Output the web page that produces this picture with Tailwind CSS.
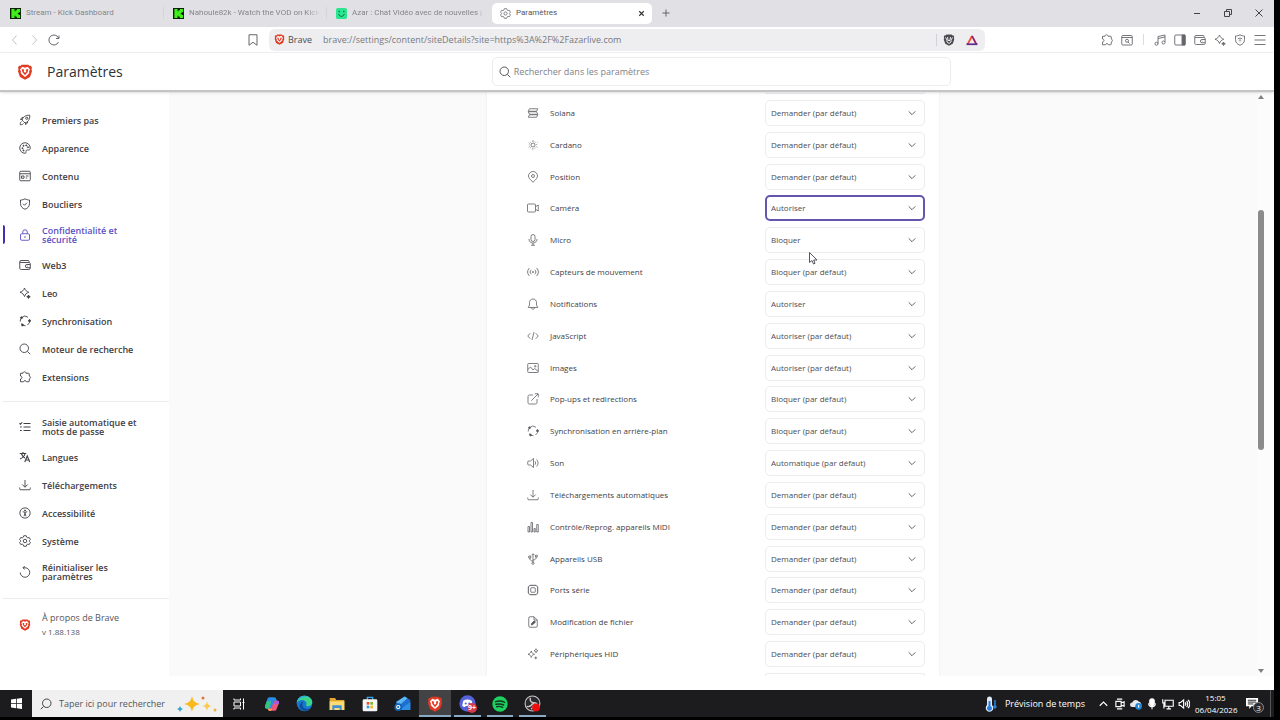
<!DOCTYPE html>
<html lang="fr">
  <head>
    <meta charset="UTF-8" />
    <meta name="viewport" content="width=device-width, initial-scale=1.0" />
    <title>Paramètres</title>
    <script src="https://cdn.jsdelivr.net/npm/@tailwindcss/browser@4"></script>
  </head>
  <body class="bg-black font-['Open_Sans','Noto_Sans',sans-serif] text-[#3b3e4f]">
    <!-- icon sprite -->
    <svg class="hidden">
      <symbol id="i-brave" viewBox="0 0 24 24"><path fill="#e03a24" d="M7 1h10l2 2 2-.3L22.500 6l-.8 2 .8 3-3 8.500L12 23.500 4.500 19.500l-3-8.500.8-3L1.500 6 3 2.700 5 3z"/><path fill="#fff" d="M12 5.500l4-1.500 3.500 4-1.500 3.500.5 2-2.500 2.500-4 3.500-4-3.500L5.500 13.500l.5-2L4.500 8 8 4z"/><path fill="#e03a24" d="M7 7.500l3.500.8-.3 3.200 1.800 1.500 1.800-1.500-.3-3.200 3.500-.8-1 4.500L12 17l-4-5z"/></symbol>
      <symbol id="i-lion" viewBox="0 0 24 24"><path fill="#4a4b52" d="M7 1h10l2 2 2-.3L22.500 6l-.8 2 .8 3-3 8.500L12 23.500 4.500 19.500l-3-8.500.8-3L1.500 6 3 2.700 5 3z"/><path fill="none" stroke="#fff" stroke-width="1.800" d="M5 7l3 5v4l4 3 4-3v-4l3-5M9 6l1 6 2 2 2-2 1-6"/></symbol>
      <symbol id="i-rocket" viewBox="0 0 24 24"><path d="M9 15l-3-3c1.500-5 6-10 15.500-9.500C22 12 17 16.500 12 18zM6.500 11H3l3-4h3M13 17.500V21l4-3v-3M5 15c-2 1-2.500 3-2.500 6.500 3.500 0 5.500-.5 6.500-2.500"/><circle cx="15.500" cy="8.500" r="2.200"/></symbol>
      <symbol id="i-palette" viewBox="0 0 24 24"><path d="M12 1.500a10.500 10.500 0 1 0 0 21c2 0 2.500-1.500 2-3-.6-2 .5-3.500 2.500-3.500H19c2.500 0 3.500-1.500 3.500-4A10.500 10.500 0 0 0 12 1.500z"/><g fill="currentColor"><circle cx="7" cy="12.500" r="1.100"/><circle cx="9" cy="7.500" r="1.100"/><circle cx="14.500" cy="6.800" r="1.100"/><circle cx="18" cy="10.500" r="1.100"/><circle cx="9" cy="17" r="1.100"/></g></symbol>
      <symbol id="i-content" viewBox="0 0 24 24"><rect x="1.500" y="2.500" width="21" height="19" rx="2"/><path d="M1.500 7.500h21M13.500 12h5.500M13.500 16h3M5 12h5v4.500H5z"/></symbol>
      <symbol id="i-shield" viewBox="0 0 24 24"><path d="M12 1.500c3 2 6 2.500 9 2.500v7c0 6-3.500 9.500-9 11.500C6.500 20.500 3 17 3 11V4c3 0 6-.5 9-2.500zM8 11.500l3 3 5-5"/></symbol>
      <symbol id="i-lock" viewBox="0 0 24 24"><rect x="3" y="9.500" width="18" height="13" rx="2.500"/><path d="M7.500 9.500V6a4.500 4.500 0 0 1 9 0v3.500M12 14v4"/></symbol>
      <symbol id="i-wallet" viewBox="0 0 24 24"><path d="M20 7V4.500C20 3.500 19 3 18 3H4C2.500 3 1.500 4 1.500 5.500V18c0 2 1 3 3 3h15c2 0 3-1 3-3v-8c0-2-1-3-3-3H4C2.500 7 1.500 6.500 1.500 5.500M22.500 11H16a3 3 0 0 0 0 6.500h6.500M16 14.200h1"/></symbol>
      <symbol id="i-leo" viewBox="0 0 24 24"><path d="M11 2c1.500 4.500 4 7 8.500 8.500-4.500 1.500-7 4-8.500 8.500-1.500-4.500-4-7-9-8.500C7 9 9.500 6.500 11 2z"/><path fill="currentColor" d="M19 16l1 2.500 2.500 1-2.500 1-1 2.500-1-2.500-2.500-1 2.500-1z"/></symbol>
      <symbol id="i-sync" viewBox="0 0 24 24"><path d="M5.500 5A9.500 9.500 0 0 1 18 4.500M21 9a9.500 9.500 0 0 1-4 11M13 21.500A9.500 9.500 0 0 1 4 17M2.500 13A9.500 9.500 0 0 1 4 7"/><g fill="currentColor"><circle cx="5" cy="5.500" r="1.800"/><circle cx="21" cy="11.500" r="2"/><circle cx="7" cy="20" r="1.800"/></g></symbol>
      <symbol id="i-search" viewBox="0 0 24 24"><circle cx="10.500" cy="10.500" r="8.500"/><path d="M16.700 16.700L22.500 22.500"/></symbol>
      <symbol id="i-puzzle" viewBox="0 0 24 24"><path d="M3 4.500h5c0-4 6-4 6 0h5c1 0 1.500.5 1.500 1.500V10c3 .5 3 5.500 0 6v4c0 1-.5 1.500-1.500 1.500h-4c-.5-3-5.500-3-6 0H3v-5.500c4 0 4-6 0-6z"/></symbol>
      <symbol id="i-list" viewBox="0 0 24 24"><path stroke-width="2.200" d="M9 5h14M9 12h14M9 19h14M1 4.500l2 2 3.500-4M2 12h3.500M2 19h3.500"/></symbol>
      <symbol id="i-lang" viewBox="0 0 24 24"><path d="M1.500 5h13M8 2v3M12 5c-1 5-5 9-10 11M4.500 5c1.500 4 4 7 7.500 9M11.500 22l5-12 5 12M13.500 18h6.500" stroke-width="2.200"/></symbol>
      <symbol id="i-download" viewBox="0 0 24 24"><path d="M12 2v14M6.500 11l5.500 5.500 5.500-5.500M1.500 17v2.500c0 1.500.5 2 2 2h17c1.500 0 2-.5 2-2V17"/></symbol>
      <symbol id="i-access" viewBox="0 0 24 24"><circle cx="12" cy="12" r="10.300"/><path d="M7.500 9.500l4.500 1 4.500-1M12 10.500v4M12 13l-2 5.500M12 13l2 5.500"/><circle cx="12" cy="6.800" r="1" fill="currentColor"/></symbol>
      <symbol id="i-gear" viewBox="0 0 24 24"><path d="M9.500 1.500h5l1 3 2 1.200 3-.7 2.300 4-2 2.300v1.400l2 2.300-2.300 4-3-.7-2 1.200-1 3h-5l-1-3-2-1.200-3 .7-2.300-4 2-2.300v-1.400l-2-2.300 2.300-4 3 .7 2-1.200z"/><circle cx="12" cy="12" r="3.500"/></symbol>
      <symbol id="i-reset" viewBox="0 0 24 24"><path d="M2.500 13a9.500 9.500 0 1 0 9.500-9.500H8M11.500 0L8 3.500 11.500 7"/></symbol>
      <symbol id="i-solana" viewBox="0 0 24 24"><path d="M5 3.500h16.500l-2.500 5H2.500zM2.500 9.500H19l2.500 5H5zM5 15.500h16.500l-2.500 5H2.500z"/></symbol>
      <symbol id="i-cardano" viewBox="0 0 24 24"><circle cx="12" cy="12" r="4"/><path stroke-dasharray="1.600 2.700" d="M12 4.500a7.500 7.500 0 1 0 .01 0"/><path d="M12 2v1M12 21v1M3.500 7l.8.500M20 16.500l.8.500M3.500 17l.8-.5M20 7.500l.8-.5"/></symbol>
      <symbol id="i-pin" viewBox="0 0 24 24"><path d="M12 22.500C6 17 3 13.500 3 10a9 9 0 0 1 18 0c0 3.500-3 7-9 12.500z"/><circle cx="12" cy="10" r="3"/></symbol>
      <symbol id="i-camera" viewBox="0 0 24 24"><rect x="1" y="4" width="16" height="16" rx="2"/><path d="M17 9.500L22.500 6v12L17 14.500"/></symbol>
      <symbol id="i-mic" viewBox="0 0 24 24"><rect x="8" y="1" width="8" height="14" rx="4"/><path d="M4 10c0 5 3 8 8 8s8-3 8-8M12 18v4.500M8 22.500h8"/></symbol>
      <symbol id="i-motion" viewBox="0 0 24 24"><path d="M5 4c-5 5-5 11 0 16M19 4c5 5 5 11 0 16M8.500 7.500c-3 3-3 6 0 9M15.500 7.500c3 3 3 6 0 9"/><circle cx="12" cy="12" r="1" fill="currentColor"/></symbol>
      <symbol id="i-bell" viewBox="0 0 24 24"><path d="M12 2c-4.500 0-7 3-7 7.500V14l-2.500 5h19L19 14V9.500C19 5 16.500 2 12 2zM8.500 19c.5 4.500 6.500 4.500 7 0"/></symbol>
      <symbol id="i-code" viewBox="0 0 24 24"><path d="M6.500 6.500L1.500 12l5 5.500M17.500 6.500l5 5.500-5 5.500M14 4l-4 16"/></symbol>
      <symbol id="i-image" viewBox="0 0 24 24"><rect x="1.500" y="3" width="21" height="18" rx="1.500"/><path d="M1.500 15l5.500-5 5 6 3.500-3 7 6"/><circle cx="16.500" cy="8.500" r="1.500"/></symbol>
      <symbol id="i-popup" viewBox="0 0 24 24"><path d="M12 4H5C3 4 2 5 2 7v12c0 2 1 3 3 3h12c2 0 3-1 3-3v-7M15.500 1.500h7v7M22 2L8.500 15.500"/></symbol>
      <symbol id="i-sound" viewBox="0 0 24 24"><path d="M13 3v18l-6-5H3c-1 0-1.500-.5-1.500-1.500v-5C1.500 8.500 2 8 3 8h4zM16 8.500c1.500 2 1.500 5 0 7M19 5c4 4 4 10 0 14"/></symbol>
      <symbol id="i-midi" viewBox="0 0 24 24"><path d="M2 11h3v11H2zM8 3h3v19H8zM14 15h2.500v7H14zM19.500 7h3v15h-3z"/></symbol>
      <symbol id="i-usb" viewBox="0 0 24 24"><path d="M12 19V2M9 4.500L12 1.500l3 3M12 16c-4 0-6.500-2-6.500-6M12 14c4 0 6.500-2 6.500-6M3.500 6h4v4h-4zM17 4.500h3.500V8H17z"/><circle cx="12" cy="20.500" r="2.200"/></symbol>
      <symbol id="i-chip" viewBox="0 0 24 24"><rect x="3" y="3" width="18" height="18" rx="3"/><rect x="7.500" y="7.500" width="9" height="9" rx="1"/><path d="M8 3V1M12 3V1M16 3V1M8 23v-2M12 23v-2M16 23v-2M1 8h2M1 12h2M1 16h2M21 8h2M21 12h2M21 16h2"/></symbol>
      <symbol id="i-file" viewBox="0 0 24 24"><path d="M14 1.500H6C4.500 1.500 3.500 2.500 3.500 4v16c0 1.500 1 2.500 2.500 2.500h12c1.500 0 2.500-1 2.500-2.500V8zM14 1.500V8h6.500"/><path fill="currentColor" d="M8.500 18l1-3.500 5-5 2.500 2.500-5 5z"/></symbol>
      <symbol id="i-hid" viewBox="0 0 24 24"><path d="M8.500 6c1 3.800 2.700 5.500 6.500 6.500-3.800 1-5.500 2.700-6.500 6.500-1-3.800-2.700-5.500-6.500-6.500C5.800 11.500 7.500 9.800 8.500 6zM18 1.500c.4 2.400 1.500 3.500 4 4-2.500.5-3.600 1.600-4 4-.4-2.400-1.500-3.500-4-4 2.500-.5 3.600-1.600 4-4zM17.500 17v5.500M14.800 19.700h5.500"/></symbol>
      <symbol id="i-chevron" viewBox="0 0 24 24"><path d="M4 8l8 8 8-8"/></symbol>
      <symbol id="i-kick" viewBox="0 0 24 24"><path fill="#0b1f06" d="M0 0h24v24H0z"/><path fill="#3ff01b" d="M3 2h7v5h2V5h3V2h7v7h-3v2h-2v2h2v2h3v7h-7v-3h-3v-2h-2v5H3z"/></symbol>
    </svg>

    <div class="flex h-screen flex-col pr-[6px] pb-[3px]">
      <div class="flex min-h-0 flex-1 flex-col bg-white">
        <!-- tab strip -->
        <div class="flex h-[27px] shrink-0 items-center bg-[#e1e1e5] pb-px font-['Roboto',sans-serif] text-[8px] text-[#85868c]">
          <div class="flex w-[163px] items-center gap-[5px] pl-[10px]">
            <svg class="size-[11px]"><use href="#i-kick" /></svg><span>Stream - Kick Dashboard</span>
          </div>
          <div class="flex w-[163px] items-center gap-[5px] border-l border-[#d4d4d9] pl-[9px]">
            <svg class="size-[11px] shrink-0"><use href="#i-kick" /></svg>
            <span class="mr-[6px] overflow-hidden whitespace-nowrap mask-r-from-90%">Nahoule82k - Watch the VOD on Kick</span>
          </div>
          <div class="flex w-[163px] items-center gap-[5px] border-l border-[#d4d4d9] pl-[9px]">
            <svg class="size-[11px] shrink-0" viewBox="0 0 24 24"><rect width="24" height="24" rx="4" fill="#2be58f" /><path d="M6 13c1 7 11 7 12 0" fill="none" stroke="#0b5c48" stroke-width="2" /><path d="M7 6v3M17 6v3" stroke="#0b5c48" stroke-width="2.500" /></svg>
            <span class="mr-[6px] overflow-hidden whitespace-nowrap mask-r-from-95%">Azar : Chat Vidéo avec de nouvelles personnes</span>
          </div>
          <div class="ml-[3px] flex h-[21px] w-[160px] items-center rounded-[5px] bg-white pr-[6px] pl-[8px] text-[#55565c]">
            <svg class="mr-[5px] size-[11px] fill-none stroke-[#55565c] stroke-[1.5]"><use href="#i-gear" /></svg>
            <span>Paramètres</span>
            <button class="ml-auto" aria-label="Fermer l'onglet"><svg class="size-[9px] fill-none stroke-[#333] stroke-[1.5]" viewBox="0 0 12 12"><path d="M3 3l6 6M9 3l-6 6" /></svg></button>
          </div>
          <button class="ml-[10px]" aria-label="Nouvel onglet"><svg class="size-[8px] fill-none stroke-[#666]" viewBox="0 0 8 8"><path d="M4 .5v7M.5 4h7" /></svg></button>
          <div class="ml-auto flex items-center gap-[23px] pr-[11px]">
            <button aria-label="Réduire"><svg class="size-[8px] fill-none stroke-[#444]" viewBox="0 0 8 8"><path d="M1 4.500h6" /></svg></button>
            <button aria-label="Restaurer"><svg class="size-[8px] fill-none stroke-[#444]" viewBox="0 0 8 8"><path d="M.5 2.500h5v5h-5zM2.500 2.500v-2h5v5h-2" /></svg></button>
            <button aria-label="Fermer"><svg class="size-[8px] fill-none stroke-[#444]" viewBox="0 0 8 8"><path d="M.5.5l7 7M7.500.5l-7 7" /></svg></button>
          </div>
        </div>

        <!-- toolbar -->
        <div class="flex h-[26px] shrink-0 items-center border-b border-[#f2f2f4] pl-[9px] text-[#77787f]">
          <button aria-label="Précédent"><svg class="size-[12px] fill-none stroke-[#c2c2c8] stroke-2" viewBox="0 0 24 24"><path d="M15 3l-8 9 8 9" /></svg></button>
          <button class="ml-[7px]" aria-label="Suivant"><svg class="size-[12px] fill-none stroke-[#c2c2c8] stroke-2" viewBox="0 0 24 24"><path d="M9 3l8 9-8 9" /></svg></button>
          <button class="ml-[8px]" aria-label="Actualiser"><svg class="size-[12px] fill-none stroke-[#66676d] stroke-2" viewBox="0 0 24 24"><path d="M21 16a10 10 0 1 1 0-8M22 3v6h-6" /></svg></button>
          <button class="ml-[187px]" aria-label="Favori"><svg class="size-[12px] fill-none stroke-[#66676d] stroke-2" viewBox="0 0 24 24"><path d="M4 1.500h16v21l-8-6-8 6z" /></svg></button>
          <div class="ml-[10px] flex h-[22px] w-[716px] items-center rounded-[6px] bg-[#eeeef1] pr-[7px] pl-[5px]">
            <svg class="mr-[3px] size-[11px]"><use href="#i-brave" /></svg>
            <label for="url" class="w-[35px] text-[9px] text-[#4b4c53]">Brave</label>
            <input id="url" class="min-w-0 flex-1 bg-transparent text-[9px] outline-none" value="brave://settings/content/siteDetails?site=https%3A%2F%2Fazarlive.com" />
            <span class="h-[12px] w-px bg-[#d2d2d8]"></span>
            <button class="ml-[6px]" aria-label="Boucliers"><svg class="size-[12px]"><use href="#i-lion" /></svg></button>
            <button class="ml-[11px]" aria-label="Rewards"><svg class="size-[12px] fill-none stroke-[3.5]" viewBox="0 0 24 24"><path stroke="#f4502e" d="M3 21L12 4" /><path stroke="#9e1f63" d="M12 4l9 17" /><path stroke="#5f2a91" d="M1 20.500h22" /></svg></button>
          </div>
          <div class="ml-auto flex items-center gap-[8px] fill-none stroke-[#66676d] stroke-[1.8] pr-[8px]">
            <button aria-label="Extensions"><svg class="size-[12px]"><use href="#i-puzzle" /></svg></button>
            <button aria-label="Rechercher un onglet"><svg class="size-[12px]" viewBox="0 0 24 24"><rect x="1.500" y="3" width="21" height="19" rx="2" /><path d="M1.500 7h21M14 16l3 3" /><circle cx="12" cy="13.500" r="3" /></svg></button>
            <span class="mx-[2px] h-[11px] w-px bg-[#dcdce0]"></span>
            <button aria-label="Playlist"><svg class="size-[12px]" viewBox="0 0 24 24"><path d="M8 19V5l14-3v14M8 9l14-3" /><circle cx="5" cy="19.500" r="3" /><circle cx="19" cy="17" r="3" /></svg></button>
            <button aria-label="Barre latérale"><svg class="size-[12px]" viewBox="0 0 24 24"><rect x="1.500" y="2" width="21" height="20" rx="2" /><path fill="#66676d" d="M16 2h6v20h-6z" /></svg></button>
            <button aria-label="Portefeuille"><svg class="size-[12px]"><use href="#i-wallet" /></svg></button>
            <button aria-label="Leo"><svg class="size-[12px] text-[#66676d]"><use href="#i-leo" /></svg></button>
            <button aria-label="VPN"><svg class="size-[12px]" viewBox="0 0 24 24"><path d="M12 1.500c3 2 6 2.500 9 2.500v7c0 6-3.500 9.500-9 11.500C6.500 20.500 3 17 3 11V4c3 0 6-.5 9-2.500zM7.500 10c3-2.500 6-2.500 9 0M9.500 13c2-1.300 3-1.300 5 0M12 15.500v1" /></svg></button>
            <button aria-label="Menu"><svg class="size-[12px]" viewBox="0 0 24 24"><path d="M1 3h22M1 12h22M1 21h22" /></svg></button>
          </div>
        </div>

        <!-- settings header -->
        <header class="relative flex h-[39px] shrink-0 items-center border-b-2 border-[#c4c4c6] shadow-sm">
          <svg class="ml-[17px] size-[16px]"><use href="#i-brave" /></svg>
          <h1 class="ml-[14px] text-[14px] font-medium text-[#2f3036]">Paramètres</h1>
          <div class="ml-[369px] flex h-[29px] w-[459px] items-center gap-[3px] rounded-[5px] border border-[#ececef] pl-[6px]">
            <svg class="size-[12px] fill-none stroke-[#55565c] stroke-2"><use href="#i-search" /></svg>
            <input type="search" aria-label="Rechercher dans les paramètres" placeholder="Rechercher dans les paramètres" class="flex-1 bg-transparent text-[9px] outline-none placeholder:text-[#808188]" />
          </div>
        </header>

        <div class="flex min-h-0 flex-1 pb-[14px]">
          <nav id="menu" class="ml-[3px] w-[166px] shrink-0 pt-[14px] text-[9px] leading-[9px] font-semibold"></nav>

          <main class="flex min-w-0 flex-1 justify-center overflow-hidden bg-[#fafafb]">
            <div class="flex w-[452px] flex-col bg-white pr-[14px] pl-[40px] shadow-[0_0_2px_#e8e8ea]">
              <div class="ml-auto h-[2px] w-[160px] shrink-0 rounded-b-[5px] border-x border-b border-[#ececef]"></div>
              <div id="permissions" class="mt-[3px] grid min-h-0 flex-1 auto-rows-fr text-[8px]"></div>
              <div class="mt-[3px] ml-auto h-[3px] w-[160px] shrink-0 rounded-t-[5px] border-x border-t border-[#ececef]"></div>
            </div>
          </main>

          <!-- scrollbar -->
          <div class="flex w-[17px] shrink-0 flex-col items-center justify-between bg-[#fcfcfc] py-[3px] pr-[9px]">
            <svg class="h-[4px] w-[6px] fill-[#808080]" viewBox="0 0 6 4"><path d="M0 4l3-4 3 4z" /></svg>
            <div class="mt-[111px] mb-auto h-[240px] w-[6px] rounded-full bg-[#8b8b8b]"></div>
            <svg class="h-[4px] w-[6px] fill-[#808080]" viewBox="0 0 6 4"><path d="M0 0l3 4 3-4z" /></svg>
          </div>
        </div>
      </div>

      <!-- taskbar -->
      <footer class="flex h-[27px] shrink-0 items-center bg-[#1c1c1f] text-white">
        <button class="flex w-[32px] justify-center" aria-label="Démarrer"><svg class="size-[11px] fill-white" viewBox="0 0 22 22"><path d="M0 3l10-1.500V10.500H0zM11.500 1.300L22 0v10.500H11.500zM0 12h10v8.500L0 19zM11.500 12H22v10l-10.500-1.500z" /></svg></button>
        <div class="flex h-full w-[191px] items-center gap-[7px] bg-[#f0f0f0] pr-[6px] pl-[8px]">
          <svg class="size-[12px] -scale-x-100 fill-none stroke-[#444] stroke-2"><use href="#i-search" /></svg>
          <input aria-label="Taper ici pour rechercher" placeholder="Taper ici pour rechercher" class="w-[110px] bg-transparent text-[9px] outline-none placeholder:text-[#55565a]" />
          <svg class="ml-auto h-[18px] w-[40px]" viewBox="0 0 40 18"><path fill="#f9b91c" d="M15 1c1 5 3 7 8 8-5 1-7 3-8 8-1-5-3-7-8-8 5-1 7-3 8-8z" /><path fill="#f8ca52" d="M30 6c.7 3.500 1.500 4.300 5 5-3.500.7-4.300 1.500-5 5-.7-3.500-1.500-4.300-5-5 3.500-.7 4.300-1.500 5-5z" /><path fill="#2ba3d4" d="M3 11l1 2 2 1-2 1-1 2-1-2-2-1 2-1z" /><circle cx="26" cy="3" r="1.500" fill="#d9773c" /><circle cx="38" cy="15" r="1.500" fill="#e8b647" /></svg>
        </div>
        <div class="flex h-full w-[326px]">
          <button class="flex flex-1 items-center justify-center" aria-label="Vue des tâches"><svg class="size-[12px] fill-none stroke-white stroke-2" viewBox="0 0 24 24"><path d="M2 1v3h13V1M2 8h13v8H2zM2 23v-3h13v3M21 1v22M19 9h4" /></svg></button>
          <button class="flex flex-1 items-center justify-center" aria-label="Copilot"><svg class="size-[16px]" viewBox="0 0 24 24"><path fill="#2a8de8" d="M8 2h7c2 0 3 1 3.500 3l1 3H15l-2 7c-1 3-2 4-4 4H4c-3 0-3-2-2-5l3-9c.5-2 1.500-3 3-3z" /><path fill="#35c27e" d="M4 8l-2 6c-1 3-1 5 2 5h4l3-11z" /><path fill="#e9577a" d="M16 22H9c-2 0-3-1-3.500-3l5.500-1 3-8c.5-2 1.500-3 3-3h3c3 0 3 2 2 5l-3 7c-.5 2-1.500 3-3 3z" /><path fill="#f7a44c" d="M6 19h6l-1 3H9c-2 0-3-1-3-3z" /><path fill="#a85be0" d="M17 7h3c3 0 3 2 2 5h-7z" /></svg></button>
          <button class="flex flex-1 items-center justify-center" aria-label="Edge"><svg class="size-[17px]" viewBox="0 0 24 24"><circle cx="12" cy="12" r="11" fill="#1679cf" /><path fill="#3ed58b" d="M1 11C2 4 7 1 12 1c7 0 11 5 11 9 0 4-3 6-6 6-2 0-3-1-2.500-2.500C16 10 12 7 8 7c-3 0-6 2-7 4z" /><path fill="#2cb5dc" d="M1 11C2 5 6 1 12 1c2 0 4 .5 6 2-5-1-14 0-17 8z" /><path fill="#0d4f9e" d="M9 13c0 5 5 8 11 6-5 6-14 4-15-3 0-4 3-7 6-7-1 1-2 2-2 4z" /></svg></button>
          <button class="flex flex-1 items-center justify-center" aria-label="Explorateur"><svg class="size-[16px]" viewBox="0 0 24 24"><path fill="#e3a72b" d="M1 3h8l2 3h12v15H1z" /><path fill="#fbdb76" d="M1 8h22v13H1z" /><path fill="#3f8fd6" d="M5 14h14v7h-3v-3H8v3H5z" /></svg></button>
          <button class="flex flex-1 items-center justify-center" aria-label="Store"><svg class="size-[16px]" viewBox="0 0 24 24"><path fill="none" stroke="#3aa5e8" stroke-width="2" d="M8 6V2h8v4" /><rect x="1" y="5" width="22" height="18" rx="2" fill="#f5f5f5" /><path fill="#e8502f" d="M7 9h4v4H7z" /><path fill="#7db929" d="M12.500 9h4v4h-4z" /><path fill="#2b9de0" d="M7 14.500h4v4H7z" /><path fill="#f5b61f" d="M12.500 14.500h4v4h-4z" /></svg></button>
          <button class="flex flex-1 items-center justify-center" aria-label="Courrier"><svg class="size-[17px]" viewBox="0 0 24 24"><path fill="#1f6fd0" d="M3 10L15 2l8 5v14H3z" /><path fill="#5cb8f2" d="M3 10L15 2l4 2.500L8 14z" /><path fill="#2f90e6" d="M23 10v11H8z" /><circle cx="6" cy="17" r="5.500" fill="#1263b4" /><circle cx="6" cy="17" r="2.300" fill="none" stroke="#fff" stroke-width="1.500" /></svg></button>
          <button class="relative flex flex-1 items-center justify-center bg-[#434346]" aria-label="Brave"><svg class="size-[16px]"><use href="#i-brave" /></svg><span class="absolute inset-x-0 bottom-0 h-[2px] bg-[#8aa9c4]"></span></button>
          <button class="relative flex flex-1 items-center justify-center" aria-label="Discord"><span class="relative"><svg class="size-[17px]" viewBox="0 0 24 24"><circle cx="12" cy="12" r="11.500" fill="#5662d8" /><path fill="#fff" d="M6 8c4-2 8-2 12 0l1.500 7c-2 2-3 2-4 2l-1-1.500h-5L8.500 17c-1 0-2 0-4-2z" /><circle cx="9.500" cy="12" r="1.500" fill="#5662d8" /><circle cx="14.500" cy="12" r="1.500" fill="#5662d8" /></svg><span class="absolute -right-[1px] -bottom-[1px] flex size-[10px] items-center justify-center rounded-full bg-[#d43a4a] text-[7px] font-bold">9+</span></span><span class="absolute inset-x-[3px] bottom-0 h-[2px] bg-[#8aa9c4]"></span></button>
          <button class="relative flex flex-1 items-center justify-center" aria-label="Spotify"><svg class="size-[16px]" viewBox="0 0 24 24"><circle cx="12" cy="12" r="11.500" fill="#1ed05e" /><path fill="none" stroke="#12361f" stroke-width="2.200" stroke-linecap="round" d="M5.500 8.500c5-1.500 9.500-1 13.500 1M6 12.500c4-1 8-.8 11.500 1M7 16c3-.8 6-.5 9 1" /></svg><span class="absolute inset-x-[3px] bottom-0 h-[2px] bg-[#8aa9c4]"></span></button>
          <button class="relative flex flex-1 items-center justify-center" aria-label="OBS"><svg class="size-[17px]" viewBox="0 0 24 24"><circle cx="12" cy="12" r="10.500" fill="#2b2b2f" stroke="#c8c8c8" stroke-width="1.500" /><path fill="none" stroke="#c8c8c8" stroke-width="2" d="M9 4c-1 4 1 7 5 7 3 0 5 2 5 5M12 12c-2 4-5 5-8 4M13 11c1 4 0 7-3 9" /><circle cx="17" cy="17.500" r="5.500" fill="#f20d0d" /></svg><span class="absolute inset-x-[3px] bottom-0 h-[2px] bg-[#8aa9c4]"></span></button>
        </div>

        <div class="ml-auto flex h-full items-center">
          <svg class="h-[16px] w-[12px]" viewBox="0 0 12 16"><path fill="#dce9f7" d="M2 3a2.500 2.500 0 0 1 5 0v6a3.800 3.800 0 1 1-5 0z" /><path fill="#2b7de0" d="M3.500 5h2v5a2.500 2.500 0 1 1-2 0z" /><path fill="none" stroke="#2f7fe0" stroke-width="1.500" d="M10 4v7M8.500 10l1.500 2 1.500-2" /></svg>
          <span class="ml-[8px] text-[9px]">Prévision de temps</span>
          <div class="ml-[14px] flex items-center gap-[4px] fill-none stroke-white stroke-[1.5]">
            <svg class="mr-[2px] size-[9px]" viewBox="0 0 12 12"><path d="M1 9l5-5 5 5" /></svg>
            <svg class="size-[12px]" viewBox="0 0 16 16"><path d="M4 1.500h7M4 14.500h7M2.500 4.500h7v7h-7zM9.500 6.500l4-1.500v6l-4-1.500" /></svg>
            <svg class="size-[12px] stroke-none" viewBox="0 0 16 16"><path fill="#e8e8ee" d="M3 12a3 3 0 0 1 0-6 5 5 0 0 1 9-1c2 0 3 2 3 3.500V12z" /><circle cx="11.500" cy="11" r="4.500" fill="#1f86d8" /><path stroke="#fff" d="M11.500 9v4" /></svg>
            <svg class="size-[12px]" viewBox="0 0 16 16"><rect x="5" y="1" width="6" height="9" rx="3" fill="#fff" /><path d="M3.500 7c0 6 9 6 9 0M8 12v3" /></svg>
            <svg class="size-[12px]" viewBox="0 0 16 16"><path d="M4 3h11v8H4zM9 11v3M6 14.500h6M1 1.500v5h3M2.500 6v8" /></svg>
            <svg class="size-[12px]" viewBox="0 0 16 16"><path d="M1.500 6h2l4-3.500v11L3.500 10h-2zM9.500 6c1 1 1 3 0 4M11.500 4c2 2 2 6 0 8M13.500 2.500c3 3 3 8 0 11" /></svg>
          </div>
          <div class="ml-[5px] w-[41px] text-center text-[8px] leading-[12px]">15:05<br />06/04/2026</div>
          <button class="relative ml-[10px]" aria-label="Notifications"><svg class="size-[13px]" viewBox="0 0 14 14"><path fill="#fff" d="M0 1h13v9H6l-2.500 3v-3H0z" /><path stroke="#1c1c1f" d="M2 3.500h9M2 5.500h9M2 7.500h6" /></svg><span class="absolute -right-[5px] -bottom-[3px] flex size-[11px] items-center justify-center rounded-full border border-[#88888c] bg-[#2a2a2d] text-[8px] leading-none">3</span></button>
          <span class="mr-[3px] ml-[11px] h-full w-px bg-[#55555a]"></span>
        </div>
      </footer>
    </div>

    <!-- mouse pointer -->
    <svg class="absolute top-[252px] left-[809px] h-[13px] w-[9px] fill-white stroke-[#55565c]" viewBox="0 0 9 13"><path d="M.5.5v10l2.500-2 1.500 3.500 1.500-.7L4.700 8H8z" /></svg>

    <script>
      const menu = [
        ["rocket", "Premiers pas"],
        ["palette", "Apparence"],
        ["content", "Contenu"],
        ["shield", "Boucliers"],
        ["lock", "Confidentialité et<br>sécurité", "active"],
        ["wallet", "Web3"],
        ["leo", "Leo"],
        ["sync", "Synchronisation"],
        ["search", "Moteur de recherche"],
        ["puzzle", "Extensions"],
        null,
        ["list", "Saisie automatique et<br>mots de passe"],
        ["lang", "Langues"],
        ["download", "Téléchargements"],
        ["access", "Accessibilité"],
        ["gear", "Système"],
        ["reset", "Réinitialiser les<br>paramètres"],
      ];

      const ask = "Demander (par défaut)";
      const block = "Bloquer (par défaut)";
      const allow = "Autoriser (par défaut)";
      const permissions = [
        ["solana", "Solana", ask],
        ["cardano", "Cardano", ask],
        ["pin", "Position", ask],
        ["camera", "Caméra", "Autoriser"],
        ["mic", "Micro", "Bloquer"],
        ["motion", "Capteurs de mouvement", block],
        ["bell", "Notifications", "Autoriser"],
        ["code", "JavaScript", allow],
        ["image", "Images", allow],
        ["popup", "Pop-ups et redirections", block],
        ["sync", "Synchronisation en arrière-plan", block],
        ["sound", "Son", "Automatique (par défaut)"],
        ["download", "Téléchargements automatiques", ask],
        ["midi", "Contrôle/Reprog. appareils MIDI", ask],
        ["usb", "Appareils USB", ask],
        ["chip", "Ports série", ask],
        ["file", "Modification de fichier", ask],
        ["hid", "Périphériques HID", ask],
      ];

      document.getElementById("menu").innerHTML =
        menu
          .map((item) => {
            if (!item) return `<hr class="mt-[10px] mb-[8px] border-[#ececef]">`;
            const [icon, label, active] = item;
            const height = label.includes("<br>") ? "h-[33px]" : "h-[28px]";
            const color = active ? "text-[#5a4fc4]" : "text-[#3f4046]";
            const bar = active
              ? `<span class="absolute left-0 h-[19px] w-[2px] rounded-r bg-[#4030b0]"></span>`
              : "";
            return `
            <a href="#" class="relative flex items-center gap-[11px] pl-[16px] ${height} ${color}">
              ${bar}<svg class="size-[12px] shrink-0 fill-none stroke-current stroke-[1.8]"><use href="#i-${icon}"/></svg>
              <span>${label}</span>
            </a>`;
          })
          .join("") +
        `<hr class="mt-[10px] border-[#ececef]">
        <a href="#" class="mt-[12px] flex items-center gap-[11px] pl-[16px] text-[#55565c]">
          <svg class="size-[12px] shrink-0"><use href="#i-brave"/></svg>
          <span class="font-medium leading-[14px]">À propos de Brave<br><span class="text-[8px] font-normal">v 1.88.138</span></span>
        </a>`;

      document.getElementById("permissions").innerHTML = permissions
        .map(([icon, label, value]) => {
          const border =
            icon === "camera"
              ? "border-2 border-[#6257ad] px-[4px]"
              : "border border-[#ececef] px-[5px]";
          return `
          <div class="flex items-center">
            <svg class="size-[12px] shrink-0 fill-none stroke-[#55565c] stroke-[1.5] text-[#55565c]"><use href="#i-${icon}"/></svg>
            <label for="p-${icon}" class="ml-[11px] flex-1 text-[#404147]">${label}</label>
            <div class="relative w-[160px]">
              <select id="p-${icon}" class="block h-[26px] w-full appearance-none rounded-[5px] bg-white text-[#4b4c53] ${border}"><option>${value}</option></select>
              <svg class="pointer-events-none absolute top-[8px] right-[8px] size-[10px] fill-none stroke-[#44454b] stroke-2"><use href="#i-chevron"/></svg>
            </div>
          </div>`;
        })
        .join("");
    </script>
  </body>
</html>
